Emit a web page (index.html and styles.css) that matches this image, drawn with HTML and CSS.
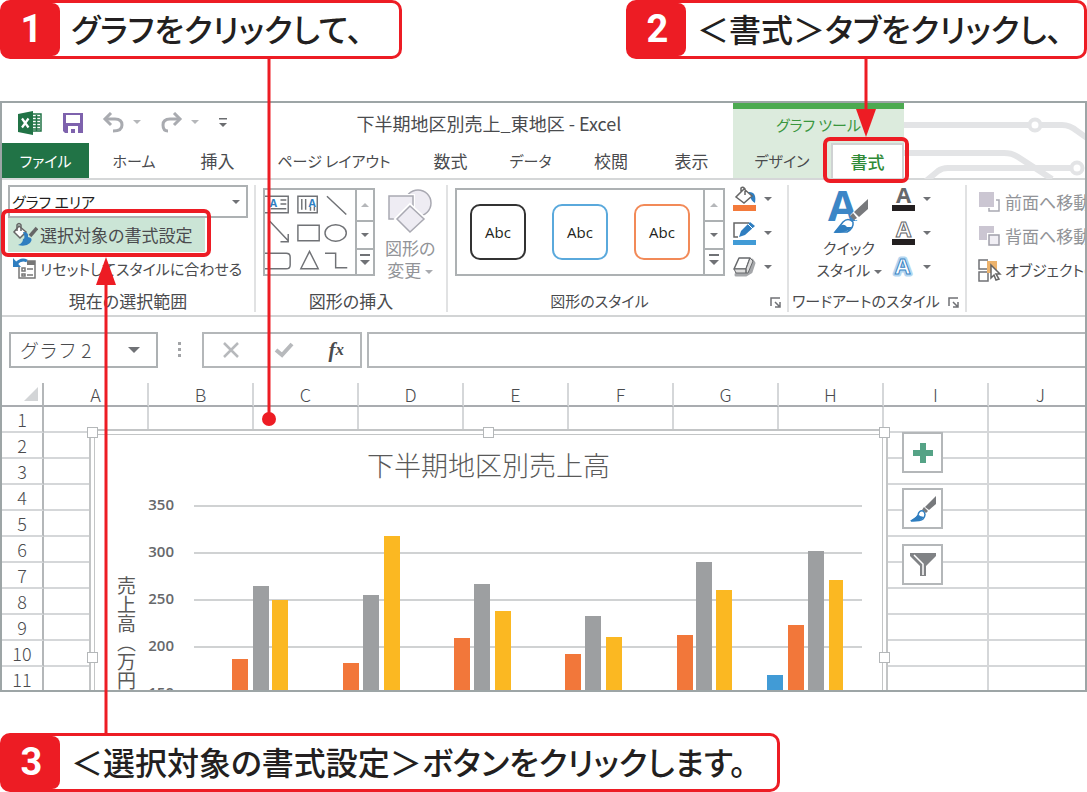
FILE: index.html
```html
<!DOCTYPE html>
<html lang="ja">
<head>
<meta charset="utf-8">
<title>下半期地区別売上_東地区 - Excel</title>
<link rel="stylesheet" href="styles.css">
</head>
<body>
<main class="figure">
  <div class="steps-top">
    <p class="callout callout-first"><b class="num">1</b><span class="callout-text">グラフをクリックして、</span></p>
    <p class="callout callout-second"><b class="num">2</b><span class="callout-text">＜書式＞タブをクリックし、</span></p>
  </div>

  <section class="window">
    <header class="top">
      <svg class="circuit" width="183" height="76" viewBox="0 0 183 76" fill="none" stroke="#e3e4e6" stroke-width="6">
        <path d="M0 22H124M138 22H158Q166 22 173 28L183 35"/><circle cx="131" cy="22" r="5.500" stroke-width="4"/>
        <path d="M0 50H100Q108 50 114 54L148 76"/>
        <path d="M22 78L34 68Q38 65 44 65H166"/><circle cx="173" cy="65" r="5.500" stroke-width="4"/>
      </svg>
      <div class="titlebar">
        <div class="qat">
          <svg class="logo" width="26" height="24" viewBox="0 0 26 24"><path fill="#fff" stroke="#217346" stroke-width="1.500" d="M13 3H23V20H13z"/><path stroke="#217346" stroke-width="1.500" d="M15 6H22M15 9H22M15 12H22M15 15H22M15 18H22M18.500 4V20"/><path fill="#217346" d="M0 3L15 0V24L0 21z"/><path stroke="#fff" stroke-width="2.200" d="M4 7.500L10.500 16.500M10.500 7.500L4 16.500"/></svg>
          <button class="plain" aria-label="上書き保存"><svg width="22" height="22" viewBox="0 0 22 22"><path fill="#7e62ad" d="M1 1H21V21H3L1 19z"/><path fill="#fff" d="M4 3H18V11H4zM6 14H16V21H13V17H9V21H6z"/></svg></button>
          <button class="plain" aria-label="元に戻す"><svg width="40" height="22" viewBox="0 0 40 22"><g fill="none" stroke="#a9abb0" stroke-width="3"><path d="M3 7H13Q20 7 20 13Q20 19 11 19"/><path d="M9 1L3 7L9 13"/></g><path fill="#b5b7ba" d="M31 8H39L35 12z"/></svg></button>
          <button class="plain" aria-label="やり直し"><svg width="40" height="22" viewBox="0 0 40 22"><g fill="none" stroke="#a9abb0" stroke-width="3"><path d="M20 7H10Q3 7 3 13Q3 19 8 19"/><path d="M14 1L20 7L14 13"/></g><path fill="#b5b7ba" d="M31 8H39L35 12z"/></svg></button>
          <button class="plain" aria-label="クイック アクセス ツール バーのユーザー設定"><svg width="10" height="12" viewBox="0 0 10 12"><path fill="#6b6d70" d="M1 1H9V2.500H1zM1 6H9L5 10z"/></svg></button>
        </div>
        <h1 class="doc-title">下半期地区別売上_東地区 - Excel</h1>
        <div class="context-title kana">グラフ ツール</div>
      </div>
      <nav class="tabs">
        <button class="tab kana file">ファイル</button>
        <button class="tab kana">ホーム</button>
        <button class="tab">挿入</button>
        <button class="tab kana">ページ レイアウト</button>
        <button class="tab">数式</button>
        <button class="tab kana">データ</button>
        <button class="tab">校閲</button>
        <button class="tab">表示</button>
        <button class="tab kana context">デザイン</button>
        <button class="tab active">書式</button>
      </nav>
    </header>

    <div class="ribbon">
      <section class="group group-selection">
        <div class="group-body stack">
          <label class="combo kana"><select aria-label="グラフ要素"><option>グラフ エリア</option></select><i class="caret"></i></label>
          <button class="command selected"><svg width="26" height="26" viewBox="0 0 26 26"><path fill="#fff" stroke="#666" stroke-width="1.500" d="M7 4L14 10L8 16L2 10z"/><path fill="none" stroke="#666" stroke-width="1.500" d="M5 9V3Q7 0 9 3V9"/><path stroke="#666" stroke-width="3.500" d="M25 6L18 14"/><path fill="#2f7ec0" d="M11 10Q17 10 16 15Q22 16 18 21Q14 25 6 23Q11 21 11 17Q14 17 11 10z"/></svg>選択対象の書式設定</button>
          <button class="command kana"><svg width="26" height="26" viewBox="0 0 26 26" fill="none"><path stroke="#777" stroke-width="1.500" d="M7 11V22H23V5H15"/><path stroke="#777" stroke-width="1.500" d="M10 12H13V15H10zM10 18H13V20H10zM15 13H21M15 19H21"/><path fill="#777" d="M15 5H23V9H15z"/><path stroke="#2f7ec0" stroke-width="3" d="M4 8Q9 2 15 5"/><path fill="#2f7ec0" d="M1 2V11H9z"/></svg>リセットしてスタイルに合わせる</button>
        </div>
        <h2 class="group-label">現在の選択範囲</h2>
      </section>

      <section class="group group-insert">
        <div class="group-body">
          <div class="gallery shapes">
            <svg width="93" height="85" viewBox="0 0 93 85" fill="none" stroke="#707276" stroke-width="1.500"><path d="M0 5H24V22H0M16 9H22M16 13H22M6 18H22"/><path d="M34 5H54V22H34zM38 8V19M42 8V19M47 16V20M51 16V20"/><path d="M64 5L84 24M5 31L24 51M24 44V52H16"/><path d="M34 35H56V51H34z"/><ellipse cx="73" cy="43" rx="11" ry="8.500"/><path d="M0 64H22Q26 64 26 68V76Q26 80 22 80H0M37 80L46 62L55 80zM62 64H73V79H85"/><text class="glyph-small" x="5" y="16">A</text><text class="glyph-small" x="45" y="16">A</text></svg>
            <div class="scroller"><button aria-label="上へ"><i class="caret up"></i></button><button aria-label="下へ"><i class="caret"></i></button><button aria-label="その他"><i class="caret more"></i></button></div>
          </div>
          <button class="big disabled"><svg width="46" height="46" viewBox="0 0 46 46" fill="#eeecf3" stroke="#a9a9b2" stroke-width="1.500"><circle cx="31" cy="15" r="13"/><path stroke="#fff" stroke-width="4" d="M2 8H26V31H2z"/><path d="M2 8H26V31H2z"/><path stroke="#fff" stroke-width="5" d="M23 18L37 31L23 44L10 31z"/><path d="M23 18L37 31L23 44L10 31z"/></svg><span>図形の<br>変更 <i class="caret"></i></span></button>
        </div>
        <h2 class="group-label">図形の挿入</h2>
      </section>

      <section class="group group-style">
        <div class="group-body">
          <div class="gallery styles">
            <button class="swatch black">Abc</button><button class="swatch blue">Abc</button><button class="swatch orange">Abc</button>
            <div class="scroller"><button aria-label="上へ"><i class="caret up"></i></button><button aria-label="下へ"><i class="caret"></i></button><button aria-label="その他"><i class="caret more"></i></button></div>
          </div>
          <div class="tools">
            <button class="tool" aria-label="図形の塗りつぶし"><svg width="26" height="26" viewBox="0 0 26 26"><path fill="#2f7ec0" d="M16 6Q25 5 23 17Q19 15 18 10z"/><path fill="#fff" stroke="#666" stroke-width="1.500" d="M12 3L20 10L12 17L4 11zM9 7V2Q11 0 13 3V9"/><path fill="#f37a3b" d="M1 19H24V25H1z"/></svg><i class="caret"></i></button>
            <button class="tool" aria-label="図形の枠線"><svg width="26" height="26" viewBox="0 0 26 26"><path fill="none" stroke="#666" stroke-width="1.500" d="M17 3H2V17H6"/><path fill="#2f7ec0" d="M7 17L9 11L18 2L23 6L13 15z"/><path stroke="#fff" d="M16 4L21 9"/><path fill="#419bd6" d="M1 20H24V25H1z"/></svg><i class="caret"></i></button>
            <button class="tool" aria-label="図形の効果"><svg width="26" height="26" viewBox="0 0 26 26"><path fill="#a5a7aa" stroke="#a5a7aa" stroke-width="3" stroke-linejoin="round" d="M8 6H20L22 9L19 18L14 21H4z"/><path fill="#fff" stroke="#66686b" stroke-width="1.500" stroke-linejoin="round" d="M7 4H18L14 15H2z"/><path fill="#ddd" stroke="#66686b" stroke-linejoin="round" d="M2 15H14V19H4zM14 15L18 4L21 7L16 19H14z"/></svg><i class="caret"></i></button>
          </div>
        </div>
        <h2 class="group-label kana">図形のスタイル</h2>
        <button class="launcher" aria-label="図形の書式設定"><svg width="12" height="12" viewBox="0 0 12 12" fill="none" stroke="#707276" stroke-width="1.500"><path d="M1 9V1H10M5 5L10 10M10 5V10H5"/></svg></button>
      </section>

      <section class="group group-wordart">
        <div class="group-body">
          <button class="big quick kana"><svg width="46" height="46" viewBox="0 0 46 46"><text class="glyph-large" x="2" y="33">A</text><path stroke="#fff" stroke-width="8" d="M42 14L27 30"/><path fill="#77797c" d="M42 11V21L33 29L28 24z"/><path fill="#77797c" d="M27 25L31 30L28 32L24 28z"/><path fill="#fff" stroke="#2f7ec0" stroke-width="1.500" d="M17 34Q22 29 27 34Q28 40 21 44L9 44z"/><path fill="#2f7ec0" d="M14 38Q18 35 21 39L26 39Q22 45 8 45z"/></svg><span>クイック<br>スタイル <i class="caret"></i></span></button>
          <div class="tools">
            <button class="tool" aria-label="文字の塗りつぶし"><svg width="26" height="26" viewBox="0 0 26 26"><text class="glyph-a dark" x="5" y="17">A</text><path fill="#231f20" d="M1 19H24V25H1z"/></svg><i class="caret"></i></button>
            <button class="tool" aria-label="文字の輪郭"><svg width="26" height="26" viewBox="0 0 26 26"><text class="glyph-a hollow" x="5" y="17">A</text><path fill="#231f20" d="M1 19H24V25H1z"/></svg><i class="caret"></i></button>
            <button class="tool" aria-label="文字の効果"><svg width="26" height="26" viewBox="0 0 26 26"><text class="glyph-a halo" x="4" y="20">A</text><text class="glyph-a glow" x="4" y="20">A</text></svg><i class="caret"></i></button>
          </div>
        </div>
        <h2 class="group-label kana">ワードアートのスタイル</h2>
        <button class="launcher" aria-label="文字の効果の設定"><svg width="12" height="12" viewBox="0 0 12 12" fill="none" stroke="#707276" stroke-width="1.500"><path d="M1 9V1H10M5 5L10 10M10 5V10H5"/></svg></button>
      </section>

      <section class="group group-arrange">
        <div class="group-body stack">
          <button class="command disabled"><svg width="24" height="24" viewBox="0 0 24 24"><path fill="#cbc6d2" d="M1 2H16V17H1z"/><path fill="none" stroke="#a9a9b2" stroke-width="1.500" d="M18 10H21V21H11V18"/></svg>前面へ移動</button>
          <button class="command disabled"><svg width="24" height="24" viewBox="0 0 24 24"><path fill="#cbc6d2" d="M1 2H16V9H9V16H1z"/><path fill="#f1eff5" stroke="#a0a0aa" stroke-width="1.500" d="M11 11H21V21H11z"/></svg>背面へ移動</button>
          <button class="command kana"><svg width="24" height="24" viewBox="0 0 24 24"><path fill="none" stroke="#707276" stroke-width="1.500" d="M10 2H1V11H10M1 14H10V23H1z"/><path fill="#edb36c" d="M9 3H19V15H9z"/><path fill="#fff" stroke="#666" stroke-width="1.500" d="M13 7V20L16 17L18 22L21 21L18 16H22z"/></svg>オブジェクトの選択と表示</button>
        </div>
      </section>
    </div>

    <div class="formula-bar">
      <label class="name-box"><select aria-label="名前ボックス"><option>グラフ 2</option></select><i class="caret large"></i></label>
      <svg class="grip" width="4" height="16" viewBox="0 0 4 16" fill="#a2a4a7"><path d="M0 0H3V3H0zM0 6H3V9H0zM0 12H3V15H0z"/></svg>
      <div class="fx-box">
        <button class="plain" aria-label="キャンセル"><svg width="18" height="18" viewBox="0 0 18 18"><path stroke="#b7b9bc" stroke-width="2.500" d="M2 2L16 16M16 2L2 16"/></svg></button>
        <button class="plain" aria-label="入力"><svg width="20" height="18" viewBox="0 0 20 18"><path fill="none" stroke="#b7b9bc" stroke-width="4" d="M2 9L8 14L18 3"/></svg></button>
        <button class="plain fx"><em>f</em><em class="x">x</em></button>
      </div>
      <input class="formula" type="text" aria-label="数式バー">
    </div>

    <div class="sheet">
      <table class="cells">
        <thead><tr><th class="corner"><svg width="14" height="14" viewBox="0 0 14 14"><path fill="#d3d5d7" d="M14 0V14H0z"/></svg></th><th>A</th><th>B</th><th>C</th><th>D</th><th>E</th><th>F</th><th>G</th><th>H</th><th>I</th><th>J</th></tr></thead>
        <tbody>
          <tr><th>1</th><td></td><td></td><td></td><td></td><td></td><td></td><td></td><td></td><td></td><td></td></tr>
          <tr><th>2</th><td></td><td></td><td></td><td></td><td></td><td></td><td></td><td></td><td></td><td></td></tr>
          <tr><th>3</th><td></td><td></td><td></td><td></td><td></td><td></td><td></td><td></td><td></td><td></td></tr>
          <tr><th>4</th><td></td><td></td><td></td><td></td><td></td><td></td><td></td><td></td><td></td><td></td></tr>
          <tr><th>5</th><td></td><td></td><td></td><td></td><td></td><td></td><td></td><td></td><td></td><td></td></tr>
          <tr><th>6</th><td></td><td></td><td></td><td></td><td></td><td></td><td></td><td></td><td></td><td></td></tr>
          <tr><th>7</th><td></td><td></td><td></td><td></td><td></td><td></td><td></td><td></td><td></td><td></td></tr>
          <tr><th>8</th><td></td><td></td><td></td><td></td><td></td><td></td><td></td><td></td><td></td><td></td></tr>
          <tr><th>9</th><td></td><td></td><td></td><td></td><td></td><td></td><td></td><td></td><td></td><td></td></tr>
          <tr><th>10</th><td></td><td></td><td></td><td></td><td></td><td></td><td></td><td></td><td></td><td></td></tr>
          <tr><th>11</th><td></td><td></td><td></td><td></td><td></td><td></td><td></td><td></td><td></td><td></td></tr>
        </tbody>
      </table>

      <div class="chart">
        <i class="handle top-left"></i><i class="handle top-mid"></i><i class="handle top-right"></i><i class="handle mid-left"></i><i class="handle mid-right"></i>
        <h2 class="chart-title">下半期地区別売上高</h2>
        <div class="chart-body">
          <div class="axis-title">売上高（万円</div>
          <div class="axis"><span>350</span><span>300</span><span>250</span><span>200</span><span>150</span></div>
          <svg class="plot" width="668" height="200" viewBox="0 0 668 200">
            <path stroke="#d0d2d3" stroke-width="2" d="M0 12H668M0 59H668M0 106H668M0 153H668"/>
            <g fill="#f2773a"><path d="M38 165h16v40h-16z"/><path d="M149 169h16v40h-16z"/><path d="M260 144h16v60h-16z"/><path d="M371 160h16v40h-16z"/><path d="M483 141h16v60h-16z"/><path d="M594 131h16v70h-16z"/></g>
            <g fill="#9d9fa1"><path d="M59 92h16v110h-16z"/><path d="M169 101h16v100h-16z"/><path d="M280 90h16v110h-16z"/><path d="M391 122h16v80h-16z"/><path d="M502 68h16v140h-16z"/><path d="M614 57h16v150h-16z"/></g>
            <g fill="#fbb822"><path d="M78 106h16v100h-16z"/><path d="M190 42h16v160h-16z"/><path d="M301 117h16v90h-16z"/><path d="M412 143h16v60h-16z"/><path d="M522 96h16v110h-16z"/><path d="M635 86h14v120h-14z"/></g>
            <path fill="#419bd6" d="M573 181h16v30h-16z"/>
          </svg>
        </div>
      </div>

      <div class="chart-buttons">
        <button aria-label="グラフ要素"><svg width="22" height="22" viewBox="0 0 22 22"><path fill="#55a386" d="M8 1H14V8H21V14H14V21H8V14H1V8H8z"/></svg></button>
        <button aria-label="グラフ スタイル"><svg width="28" height="28" viewBox="0 0 28 28"><path fill="#77797c" d="M27 1V9L20 15L16 12z"/><path fill="#77797c" d="M15 12L19 16L17 18L13 15z"/><path fill="#fff" stroke="#2f7ec0" stroke-width="1.500" d="M9 20Q10 15 14 16Q18 19 14 24Q12 26 2 26Q7 24 9 20z"/><path fill="#2f7ec0" d="M8 21Q10 19 11 21L15 22Q12 27 1 26z"/></svg></button>
        <button aria-label="グラフ フィルター"><svg width="28" height="28" viewBox="0 0 28 28"><path fill="#808285" d="M1 2H27V5L17 15V25H11V15L1 5z"/><path fill="none" stroke="#fff" stroke-width="1.500" d="M5 4L14 13V24"/></svg></button>
      </div>
    </div>
  </section>

  <p class="callout callout-third"><b class="num">3</b><span class="callout-text">＜選択対象の書式設定＞ボタンをクリックします。</span></p>

  <svg class="leaders" width="1087" height="792" viewBox="0 0 1087 792" fill="none" stroke="#ed1c24" stroke-width="4">
    <path stroke-width="3" d="M269 57V419M866 57V112M106 282V735"/>
    <rect x="825" y="139" width="82" height="42" rx="5"/>
    <rect x="3" y="211" width="206" height="44" rx="5"/>
    <g fill="#ed1c24" stroke="none"><circle cx="269" cy="419" r="7"/><path d="M856 109H876L866 137z"/><path d="M96 285H116L106 257z"/></g>
  </svg>
</main>
</body>
</html>
```

FILE: styles.css
```css
* { box-sizing: border-box; }

body {
  margin: 0;
  background: #fff;
  color: #4a4b4e;
  font: 17px/24px "Noto Sans CJK JP", sans-serif;
  font-feature-settings: "palt";
}

h1, h2, p { margin: 0; font-size: inherit; font-weight: 400; }

button, select, input {
  border: 0;
  border-radius: 0;
  padding: 0;
  background: none;
  color: inherit;
  font: inherit;
  font-feature-settings: inherit;
}

select { appearance: none; }
svg { display: block; flex: none; }

/* Labels made mostly of kana run a size smaller */
.kana { font-size: 15px; }

.figure { position: relative; overflow: hidden; }

/* Numbered callouts */
.steps-top { display: flex; justify-content: space-between; margin-bottom: 42px; }

.callout {
  display: flex;
  height: 59px;
  border: 3px solid #ed1c24;
  border-radius: 10px;
  background: #fff;
  color: #231f20;
}

.callout-first { width: 402px; }
.callout-second { width: 461px; }
.callout-third { width: 780px; margin-top: 41px; }

.num {
  flex: none;
  width: 57px;
  background: #ed1c24;
  border-radius: 0 8px 8px 0;
  color: #fff;
  font: 700 38px/53px Roboto, sans-serif;
  text-align: center;
}

.callout-text {
  padding-left: 11px;
  font-size: 32px;
  font-weight: 500;
  line-height: 51px;
  white-space: nowrap;
}

/* Application window */
.window { border: 2px solid #9da5a6; overflow: hidden; }

.top { position: relative; border-bottom: 2px solid #d5d7d8; }
.circuit { position: absolute; left: 902px; top: 0; }

.titlebar {
  display: grid;
  grid-template-columns: 243px 488px 171px;
  height: 40px;
}

.qat { display: flex; align-items: center; gap: 18px; padding-left: 16px; }
.plain { display: flex; align-items: center; justify-content: center; }

.doc-title { font-size: 18px; text-align: center; line-height: 40px; }

.context-title {
  border-top: 6px solid #4caa50;
  background: #dcebdd;
  color: #3a963e;
  line-height: 32px;
  text-align: center;
}

.tabs {
  display: grid;
  grid-template-columns: 87px 90px 77px 156px 77px 83px 78px 83px 98px 73px;
  height: 35px;
}

.tab { white-space: nowrap; }
.file { background: #217346; color: #fff; }
.context { background: #dcebdd; }
.active { border: 2px solid #cfd2d3; border-bottom: 0; background: #fff; color: #2f8a37; font-weight: 500; }

/* Ribbon */
.ribbon { display: flex; height: 137px; padding: 5px 0 3px; border-bottom: 2px solid #d2d4d5; }

.group {
  position: relative;
  flex: none;
  display: flex;
  flex-direction: column;
  justify-content: space-between;
  border-right: 2px solid #e1e2e3;
}

.group-selection { width: 254px; }
.group-insert { width: 192px; }
.group-style { width: 341px; }
.group-wordart { width: 178px; }
.group-arrange { flex: 1; min-width: 0; border-right: 0; overflow: hidden; }

.group-body { display: flex; padding-left: 7px; }
.group-label { text-align: center; line-height: 22px; }
.group-style .group-label { padding-right: 36px; }
.group-wordart .group-label { padding-right: 22px; white-space: nowrap; }
.stack { flex-direction: column; padding-left: 6px; }

.caret {
  display: inline-block;
  border: 4px solid transparent;
  border-top-color: #707276;
  border-bottom: 0;
  vertical-align: middle;
}
.caret.large { border-width: 6px; border-bottom: 0; }
.caret.up { border: 4px solid transparent; border-top: 0; border-bottom-color: #b5b7ba; }
.caret.more { width: 10px; border-width: 5px; border-bottom: 0; box-shadow: 0 -4px #fff, 0 -6px #707276; }

.combo, .name-box {
  display: flex;
  align-items: center;
  border: 2px solid #adb1b3;
  background: #fff;
}
.combo { width: 240px; height: 33px; padding: 0 6px 0 2px; color: #231f20; }
.combo select, .name-box select { flex: 1; min-width: 0; }

.command {
  display: flex;
  align-items: center;
  gap: 2px;
  width: 244px;
  height: 34px;
  padding-left: 4px;
  white-space: nowrap;
}
.selected { width: 197px; background: #cbe5d6; }
.disabled { color: #929498; }
.disabled .caret { border-top-color: #a9abb0; }
.group-arrange .command { padding-left: 5px; gap: 3px; }

.gallery { display: flex; height: 88px; margin-top: 3px; border: 2px solid #adb1b3; }
.shapes { width: 112px; }
.shapes svg { width: 90px; }
.styles { width: 270px; }

.scroller { display: grid; grid-template-rows: 30px 28px 26px; width: 20px; margin-left: auto; border-left: 2px solid #adb1b3; }
.scroller button { display: flex; align-items: center; justify-content: center; }
.scroller button + button { border-top: 2px solid #adb1b3; }

.big { display: flex; flex-direction: column; align-items: center; gap: 3px; padding-top: 3px; line-height: 22px; text-align: center; white-space: nowrap; }
.group-insert .big { margin-left: 10px; }
.quick { width: 70px; margin-left: 18px; }

.swatch {
  width: 56px;
  height: 56px;
  margin: 14px 13px;
  border: 2px solid #333;
  border-radius: 10px;
  color: #231f20;
  font: 500 15px/20px "Open Sans", sans-serif;
}
.blue { border-color: #5aa9dc; }
.orange { border-color: #f28a58; }

.tools { display: flex; flex-direction: column; gap: 8px; margin-left: 7px; padding-top: 1px; }
.tool { display: flex; align-items: center; gap: 6px; }

.launcher { position: absolute; right: 5px; bottom: 3px; }

.glyph-small { font: 700 11px "Open Sans", sans-serif; fill: #2f7ec0; stroke: none; }
.glyph-large { font: 700 42px "Open Sans", sans-serif; fill: #3c86c6; }
.glyph-a { font: 700 22px "Open Sans", sans-serif; }
.dark { fill: #66686b; }
.hollow { fill: #fff; stroke: #66686b; stroke-width: 1px; }
.halo { fill: none; stroke: #b4d6f0; stroke-width: 5px; stroke-linejoin: round; }
.glow { fill: #fff; stroke: #3c86c6; stroke-width: 1px; }

/* Formula bar */
.formula-bar { display: flex; align-items: center; height: 66px; padding-left: 7px; }
.name-box { width: 149px; height: 36px; padding: 0 16px 0 9px; font-size: 19px; font-weight: 300; font-feature-settings: normal; }
.grip { margin: 0 20px; }
.fx-box { display: flex; align-items: center; justify-content: space-between; width: 160px; height: 36px; padding: 0 16px 0 18px; border: 2px solid #b4b7b9; }
.fx { font: 700 21px/24px "Liberation Serif", serif; }
.fx .x { font-size: 17px; }
.formula { flex: 1; min-width: 0; height: 36px; margin-left: 5px; padding: 0 8px; border: 2px solid #b4b7b9; border-right: 0; }

/* Worksheet */
.sheet { position: relative; height: 307px; overflow: hidden; }

.cells { width: 1092px; border-collapse: separate; border-spacing: 0; table-layout: fixed; }
.cells th, .cells td { height: 26px; padding: 0; border-right: 2px solid #d5d7d9; border-bottom: 2px solid #d5d7d9; }
.cells th { font-size: 18px; font-weight: 300; line-height: 20px; text-align: center; }
.cells tr > :first-child { width: 42px; border-right-color: #b4b7b9; }
.cells thead th { height: 24px; border-bottom-color: #a9acb0; }
.corner svg { margin: 0 4px 0 auto; }

/* Embedded chart */
.chart {
  position: absolute;
  left: 87px;
  top: 46px;
  width: 799px;
  height: 454px;
  border: 2px solid #c3c5c6;
  outline: 1px solid #c3c5c6;
  outline-offset: -6px;
  background: #fff;
}

.handle { position: absolute; width: 11px; height: 11px; border: 1px solid #b4b7b9; background: #fff; }
.top-left { left: -4px; top: -4px; }
.top-mid { left: 392px; top: -4px; }
.top-right { right: -4px; top: -4px; }
.mid-left { left: -4px; top: 221px; }
.mid-right { right: -4px; top: 221px; }

.chart-title { padding-top: 16px; color: #595959; font-size: 27px; font-weight: 300; line-height: 36px; text-align: center; font-feature-settings: normal; }
.chart-body { display: flex; padding: 11px 0 0 22px; }
.axis-title { width: 26px; padding-top: 82px; color: #595959; font-size: 19px; line-height: 26px; writing-mode: vertical-rl; white-space: nowrap; font-feature-settings: normal; }
.axis { display: grid; grid-auto-rows: 47px; width: 35px; height: 200px; font: 600 15px/20px "Open Sans", sans-serif; color: #66686b; text-align: right; }
.plot { margin-left: 20px; }

.chart-buttons { position: absolute; left: 900px; top: 49px; display: grid; gap: 15px; }
.chart-buttons button { display: flex; align-items: center; justify-content: center; width: 41px; height: 41px; border: 2px solid #b4b7b9; background: #fff; }

/* Red leader lines and highlight frames */
.leaders { position: absolute; left: 0; top: 0; pointer-events: none; }
```
